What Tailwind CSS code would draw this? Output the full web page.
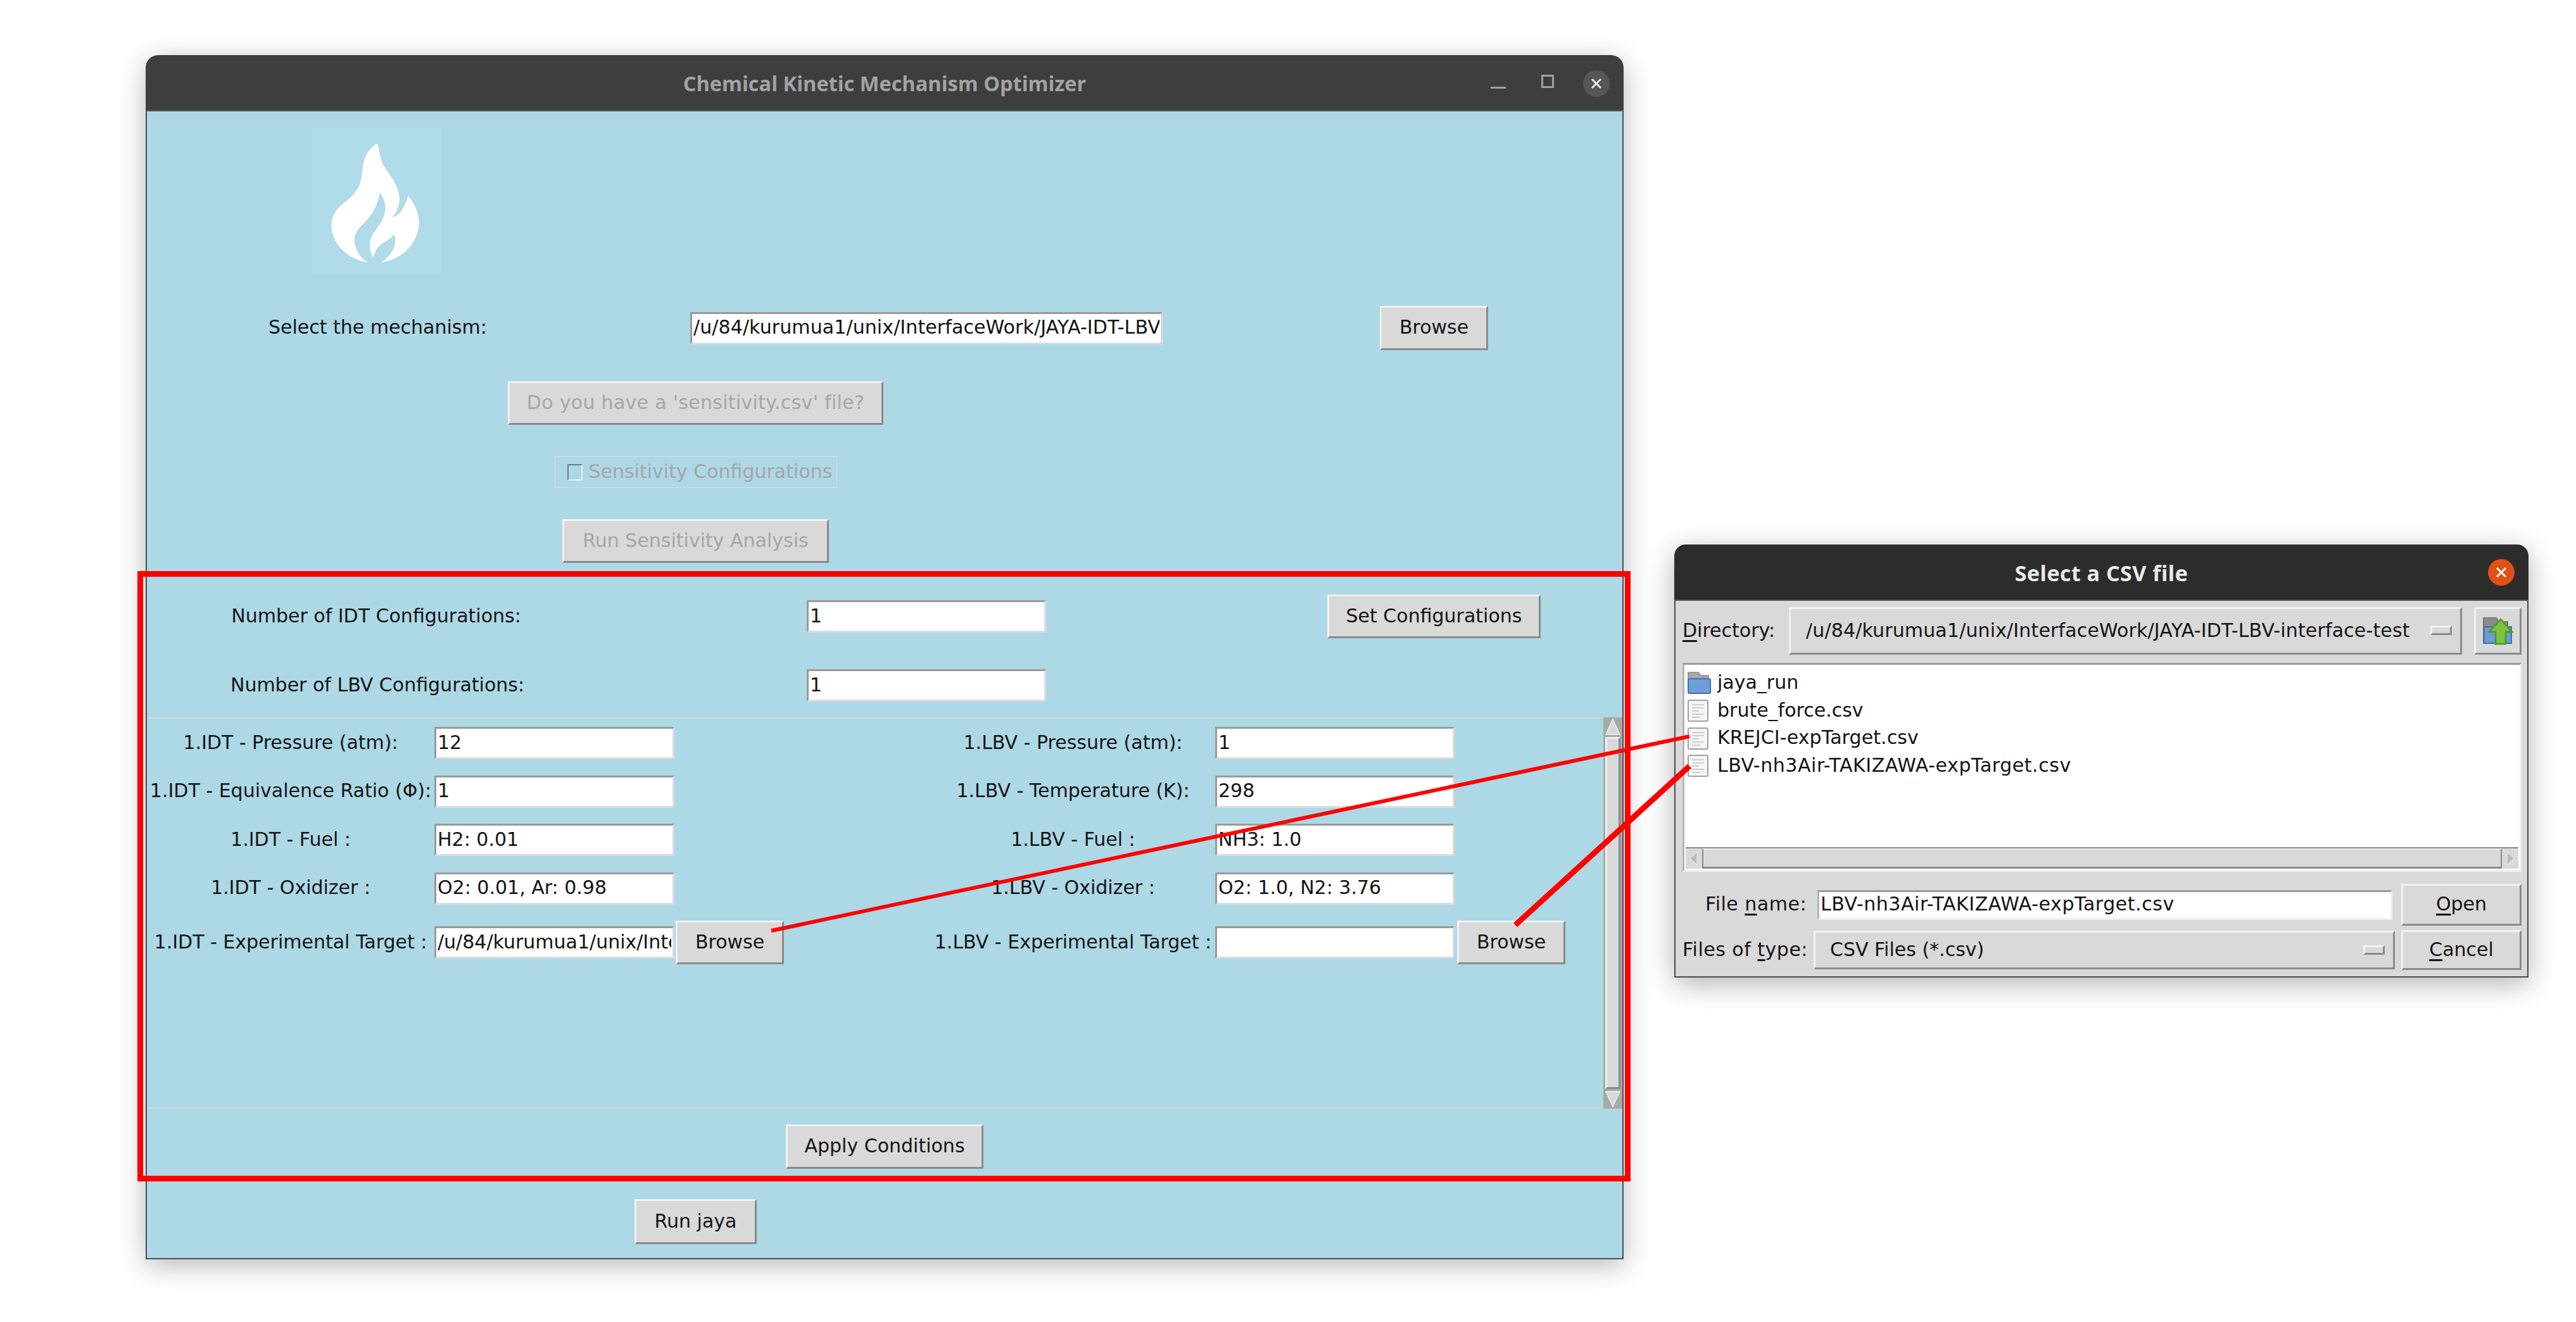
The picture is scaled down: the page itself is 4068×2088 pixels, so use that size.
<!DOCTYPE html>
<html lang="en">
<head>
  <meta charset="UTF-8" />
  <title>Chemical Kinetic Mechanism Optimizer</title>
  <script src="https://cdn.jsdelivr.net/npm/@tailwindcss/browser@4"></script>
</head>
<body class="bg-white">
<div class="relative w-[4068px] h-[2088px] overflow-hidden bg-white font-['DejaVu_Sans',sans-serif] text-[30px] leading-none whitespace-nowrap text-[#141414]">

  <!-- main window -->
  <section class="absolute left-[230px] top-[87px] w-[2334px] h-[1902px] flex flex-col rounded-t-[20px] shadow-[0_10px_44px_rgba(0,0,0,0.28)]">
    <header class="relative h-[89px] shrink-0 flex items-center justify-center rounded-t-[20px] bg-[#3e3e3e] border-b-2 border-[#5c5c5c]">
      <h1 class="mt-[4px] font-['Open_Sans',sans-serif] font-bold text-[32.5px] text-[#a3a3a3]">Chemical Kinetic Mechanism Optimizer</h1>
      <div class="absolute right-[22px] top-[24px] flex items-center">
        <span class="w-[24px] h-[3px] mt-[12px] bg-[#a0a0a0]"></span>
        <span class="w-[20px] h-[21px] ml-[56px] mb-[8px] border-[3px] border-[#a0a0a0]"></span>
        <span class="w-[42px] h-[42px] ml-[46px] flex items-center justify-center rounded-full bg-[#565656]">
          <svg width="18" height="18" viewBox="0 0 18 18"><path d="M2 2L16 16M16 2L2 16" stroke="#e6e6e6" stroke-width="3"/></svg>
        </span>
      </div>
    </header>

    <div class="flex-1 flex flex-col bg-[#add8e6] border-x-2 border-b-2 border-[#4a4f52]">
      <!-- logo -->
      <div class="ml-[260px] mt-[26px] w-[205px] h-[231px] bg-[#b0dbe9]">
        <svg class="w-full h-full" viewBox="155 65 615 695"><path fill="#fff" d="M468 140C478 180 480 215 500 250C530 295 565 335 572 395C574 430 560 465 538 490C570 485 600 440 612 388C645 425 665 470 665 520C660 610 590 690 482 705C525 680 552 640 552 600C552 590 548 578 545 570C530 600 480 610 462 645C454 660 450 670 447 680C430 650 424 615 440 580C460 540 505 505 505 440C503 415 490 385 478 372C470 425 450 470 410 510C375 545 355 565 358 605C362 645 390 690 425 705C340 695 250 625 248 530C250 450 310 425 345 390C395 340 390 300 398 245C405 190 440 150 468 140Z"/></svg>
      </div>

      <!-- mechanism -->
      <div class="mt-[50px] h-[70px] flex items-center">
        <span class="w-[858px] pl-[192px] pb-[2px]">Select the mechanism:</span>
        <input readonly value="/u/84/kurumua1/unix/InterfaceWork/JAYA-IDT-LBV" class="w-[746px] h-[51px] px-[2px] pb-[3px] tracking-[0.1px] bg-white border-[3px] border-t-[#9a9a9a] border-l-[#9a9a9a] border-b-[#dcdcdc] border-r-[#dcdcdc] outline-none" />
        <button class="ml-[343px] w-[171px] h-[70px] pb-[2px] bg-[#d9d9d9] border-[3px] border-t-[#f2f2f2] border-l-[#f2f2f2] border-b-[#8a8a8a] border-r-[#8a8a8a]">Browse</button>
      </div>

      <!-- sensitivity -->
      <div class="mt-[49px] w-[1733px] flex flex-col items-center text-[#a6a6a6]">
        <button class="w-[593px] h-[69px] pb-[2px] tracking-[0.3px] bg-[#d9d9d9] border-[3px] border-t-[#f2f2f2] border-l-[#f2f2f2] border-b-[#8a8a8a] border-r-[#8a8a8a]">Do you have a 'sensitivity.csv' file?</button>
        <label class="mt-[49px] w-[446px] h-[51px] flex items-center pl-[18px] gap-[10px] border-2 border-[#bfdfe8]">
          <span class="w-[24px] h-[26px] border-2 border-t-[#6b7b80] border-l-[#6b7b80] border-b-[#e6f4f8] border-r-[#e6f4f8]"></span>
          <span class="pb-[2px]">Sensitivity Configurations</span>
        </label>
        <button class="mt-[49px] w-[421px] h-[69px] pb-[2px] bg-[#d9d9d9] border-[3px] border-t-[#f2f2f2] border-l-[#f2f2f2] border-b-[#8a8a8a] border-r-[#8a8a8a]">Run Sensitivity Analysis</button>
      </div>

      <!-- number of configurations -->
      <div class="mt-[50px] h-[69px] flex items-center">
        <span class="w-[724px] pb-[2px] text-center">Number of IDT Configurations:</span>
        <input readonly value="1" class="ml-[318px] w-[378px] h-[51px] px-[2px] pb-[3px] bg-white border-[3px] border-t-[#9a9a9a] border-l-[#9a9a9a] border-b-[#dcdcdc] border-r-[#dcdcdc] outline-none" />
        <button class="ml-[444px] w-[337px] h-[69px] pb-[2px] bg-[#d9d9d9] border-[3px] border-t-[#f2f2f2] border-l-[#f2f2f2] border-b-[#8a8a8a] border-r-[#8a8a8a]">Set Configurations</button>
      </div>
      <div class="mt-[40px] h-[69px] flex items-center">
        <span class="w-[728px] pb-[2px] text-center">Number of LBV Configurations:</span>
        <input readonly value="1" class="ml-[314px] w-[378px] h-[51px] px-[2px] pb-[3px] bg-white border-[3px] border-t-[#9a9a9a] border-l-[#9a9a9a] border-b-[#dcdcdc] border-r-[#dcdcdc] outline-none" />
      </div>

      <!-- scrolling conditions -->
      <div class="mt-[16px] h-[618px] flex border-y-2 border-[#cfd6d9]">
        <div class="flex-1 pt-[13px] grid grid-cols-[454px_379px_407px_445px_378px_auto] gap-y-[25.5px] items-center content-start">
          <span class="pb-[2px] text-center">1.IDT - Pressure (atm):</span>
          <input readonly value="12" class="w-full h-[51px] px-[2px] pb-[3px] bg-white border-[3px] border-t-[#9a9a9a] border-l-[#9a9a9a] border-b-[#dcdcdc] border-r-[#dcdcdc] outline-none" />
          <span></span>
          <span class="pb-[2px] text-center">1.LBV - Pressure (atm):</span>
          <input readonly value="1" class="ml-[2px] w-full h-[51px] px-[2px] pb-[3px] bg-white border-[3px] border-t-[#9a9a9a] border-l-[#9a9a9a] border-b-[#dcdcdc] border-r-[#dcdcdc] outline-none" />
          <span></span>

          <span class="pb-[2px] text-center">1.IDT - Equivalence Ratio (Φ):</span>
          <input readonly value="1" class="w-full h-[51px] px-[2px] pb-[3px] bg-white border-[3px] border-t-[#9a9a9a] border-l-[#9a9a9a] border-b-[#dcdcdc] border-r-[#dcdcdc] outline-none" />
          <span></span>
          <span class="pb-[2px] text-center">1.LBV - Temperature (K):</span>
          <input readonly value="298" class="ml-[2px] w-full h-[51px] px-[2px] pb-[3px] bg-white border-[3px] border-t-[#9a9a9a] border-l-[#9a9a9a] border-b-[#dcdcdc] border-r-[#dcdcdc] outline-none" />
          <span></span>

          <span class="pb-[2px] text-center">1.IDT - Fuel :</span>
          <input readonly value="H2: 0.01" class="w-full h-[51px] px-[2px] pb-[3px] bg-white border-[3px] border-t-[#9a9a9a] border-l-[#9a9a9a] border-b-[#dcdcdc] border-r-[#dcdcdc] outline-none" />
          <span></span>
          <span class="pb-[2px] text-center">1.LBV - Fuel :</span>
          <input readonly value="NH3: 1.0" class="ml-[2px] w-full h-[51px] px-[2px] pb-[3px] bg-white border-[3px] border-t-[#9a9a9a] border-l-[#9a9a9a] border-b-[#dcdcdc] border-r-[#dcdcdc] outline-none" />
          <span></span>

          <span class="pb-[2px] text-center">1.IDT - Oxidizer :</span>
          <input readonly value="O2: 0.01, Ar: 0.98" class="w-full h-[51px] px-[2px] pb-[3px] bg-white border-[3px] border-t-[#9a9a9a] border-l-[#9a9a9a] border-b-[#dcdcdc] border-r-[#dcdcdc] outline-none" />
          <span></span>
          <span class="pb-[2px] text-center">1.LBV - Oxidizer :</span>
          <input readonly value="O2: 1.0, N2: 3.76" class="ml-[2px] w-full h-[51px] px-[2px] pb-[3px] bg-white border-[3px] border-t-[#9a9a9a] border-l-[#9a9a9a] border-b-[#dcdcdc] border-r-[#dcdcdc] outline-none" />
          <span></span>

          <span class="pb-[2px] text-center">1.IDT - Experimental Target :</span>
          <input readonly value="/u/84/kurumua1/unix/InterfaceWork/JAYA-IDT-LBV-interface-test/KREJCI-expTarget.csv" class="w-full h-[51px] px-[2px] pb-[3px] bg-white border-[3px] border-t-[#9a9a9a] border-l-[#9a9a9a] border-b-[#dcdcdc] border-r-[#dcdcdc] outline-none" />
          <button class="ml-[2px] w-[171px] h-[69px] pb-[2px] bg-[#d9d9d9] border-[3px] border-t-[#f2f2f2] border-l-[#f2f2f2] border-b-[#8a8a8a] border-r-[#8a8a8a]">Browse</button>
          <span class="pb-[2px] text-center">1.LBV - Experimental Target :</span>
          <input readonly value="" class="ml-[2px] w-full h-[51px] px-[2px] bg-white border-[3px] border-t-[#9a9a9a] border-l-[#9a9a9a] border-b-[#dcdcdc] border-r-[#dcdcdc] outline-none" />
          <button class="ml-[6px] w-[171px] h-[69px] pb-[2px] bg-[#d9d9d9] border-[3px] border-t-[#f2f2f2] border-l-[#f2f2f2] border-b-[#8a8a8a] border-r-[#8a8a8a]">Browse</button>
        </div>
        <!-- vertical scrollbar -->
        <div class="w-[30px] -my-[2px] shrink-0 flex flex-col bg-[#a9a9a9] px-[3px] py-[2px] gap-[3px]">
          <svg class="w-full h-[26px] shrink-0" viewBox="0 0 24 26"><path d="M12 1L23 25H1Z" fill="#d9d9d9" stroke="#efefef" stroke-width="1.5"/></svg>
          <div class="flex-1 bg-[#d9d9d9] border-[3px] border-t-[#efefef] border-l-[#efefef] border-b-[#8a8a8a] border-r-[#8a8a8a]"></div>
          <svg class="w-full h-[26px] shrink-0" viewBox="0 0 24 26"><path d="M12 25L23 1H1Z" fill="#d9d9d9" stroke="#efefef" stroke-width="1.5"/></svg>
        </div>
      </div>

      <div class="mt-[25px] flex justify-center">
        <button class="w-[312px] h-[70px] pb-[2px] bg-[#d9d9d9] border-[3px] border-t-[#f2f2f2] border-l-[#f2f2f2] border-b-[#8a8a8a] border-r-[#8a8a8a]">Apply Conditions</button>
      </div>
      <div class="mt-[48px] w-[1733px] flex justify-center">
        <button class="w-[193px] h-[71px] pb-[2px] bg-[#d9d9d9] border-[3px] border-t-[#f2f2f2] border-l-[#f2f2f2] border-b-[#8a8a8a] border-r-[#8a8a8a]">Run jaya</button>
      </div>
    </div>
  </section>

  <!-- file dialog -->
  <section class="absolute left-[2644px] top-[860px] w-[1349px] h-[684px] flex flex-col rounded-t-[18px] shadow-[0_10px_44px_rgba(0,0,0,0.3)]">
    <header class="relative h-[89px] shrink-0 flex items-center justify-center rounded-t-[18px] bg-[#2c2c2c] border-b-2 border-[#555]">
      <h2 class="mt-[2px] font-['Open_Sans',sans-serif] font-bold text-[34px] tracking-[0.5px] text-[#ececec]">Select a CSV file</h2>
      <span class="absolute right-[22px] top-[23px] w-[42px] h-[42px] flex items-center justify-center rounded-full bg-[#e25016]">
        <svg width="18" height="18" viewBox="0 0 18 18"><path d="M2 2L16 16M16 2L2 16" stroke="#fff" stroke-width="3"/></svg>
      </span>
    </header>

    <div class="flex-1 flex flex-col bg-[#d9d9d9] border-x-2 border-b-2 border-[#4a4a4a] pl-[11px] pr-[9px]">
      <!-- directory row -->
      <div class="mt-[10px] h-[75px] flex items-center">
        <span class="w-[168px] pb-[2px]"><span class="underline underline-offset-[5px]">D</span>irectory:</span>
        <button class="relative w-[1063px] h-[75px] pl-[24px] pb-[2px] tracking-[0.15px] text-left border-[3px] border-t-[#f2f2f2] border-l-[#f2f2f2] border-b-[#8a8a8a] border-r-[#8a8a8a]">
          /u/84/kurumua1/unix/InterfaceWork/JAYA-IDT-LBV-interface-test
          <span class="absolute right-[13px] top-[26px] w-[34px] h-[15px] border-[3px] border-t-[#f2f2f2] border-l-[#f2f2f2] border-b-[#8a8a8a] border-r-[#8a8a8a]"></span>
        </button>
        <button class="ml-[19px] w-[75px] h-[75px] flex items-center justify-center border-[3px] border-t-[#f2f2f2] border-l-[#f2f2f2] border-b-[#8a8a8a] border-r-[#8a8a8a]">
          <svg width="50" height="46" viewBox="0 0 50 46">
            <path d="M2 2H22L26 8H40V42H2Z" fill="#8c8c8c" stroke="#777" stroke-width="2"/>
            <path d="M3 16H46V42H3Z" fill="#6a9bd8" stroke="#3f6fae" stroke-width="2"/>
            <path d="M29 4L47 24H37V43H21V24H11Z" fill="#7cc242" stroke="#4e9a1a" stroke-width="2.5"/>
          </svg>
        </button>
      </div>

      <!-- file list -->
      <div class="mt-[13px] h-[330px] flex flex-col bg-white border-[3px] border-t-[#9a9a9a] border-l-[#b5b5b5] border-b-[#efefef] border-r-[#efefef]">
        <ul class="flex-1 pt-[7px] pl-[5px]">
          <li class="h-[43.7px] flex items-center gap-[10px]">
            <svg class="shrink-0" width="37" height="35" viewBox="0 0 37 35">
              <path d="M1 1H17L21 6H33V14H1Z" fill="#a8a8a8" stroke="#8a8a8a" stroke-width="1.5"/>
              <rect x="1" y="11" width="35" height="23" rx="2" fill="#6f9fd8" stroke="#3f6fae" stroke-width="2"/>
            </svg>
            <span class="-mt-[2px]">jaya_run</span>
          </li>
          <li class="h-[43.7px] flex items-center gap-[14px]">
            <svg class="shrink-0" width="33" height="35" viewBox="0 0 33 35">
              <rect x="1" y="1" width="31" height="33" rx="2" fill="#f5f5f5" stroke="#a0a0a0" stroke-width="2"/>
              <path d="M7 8H26M7 13H26M7 18H18M7 23H26M7 28H20" stroke="#cfcfcf" stroke-width="2"/>
            </svg>
            <span class="-mt-[2px]">brute_force.csv</span>
          </li>
          <li class="h-[43.7px] flex items-center gap-[14px]">
            <svg class="shrink-0" width="33" height="35" viewBox="0 0 33 35">
              <rect x="1" y="1" width="31" height="33" rx="2" fill="#f5f5f5" stroke="#a0a0a0" stroke-width="2"/>
              <path d="M7 8H26M7 13H26M7 18H18M7 23H26M7 28H20" stroke="#cfcfcf" stroke-width="2"/>
            </svg>
            <span class="-mt-[2px] tracking-[0.1px]">KREJCI-expTarget.csv</span>
          </li>
          <li class="h-[43.7px] flex items-center gap-[14px]">
            <svg class="shrink-0" width="33" height="35" viewBox="0 0 33 35">
              <rect x="1" y="1" width="31" height="33" rx="2" fill="#f5f5f5" stroke="#a0a0a0" stroke-width="2"/>
              <path d="M7 8H26M7 13H26M7 18H18M7 23H26M7 28H20" stroke="#cfcfcf" stroke-width="2"/>
            </svg>
            <span class="-mt-[2px] tracking-[0.55px]">LBV-nh3Air-TAKIZAWA-expTarget.csv</span>
          </li>
        </ul>
        <!-- horizontal scrollbar -->
        <div class="h-[34px] mx-[2px] mb-[2px] flex bg-[#bdbdbd] border-t-2 border-[#8a8a8a]">
          <svg class="w-[26px] h-full shrink-0 bg-[#d9d9d9]" viewBox="0 0 26 32"><path d="M7 16L18 6V26Z" fill="#bbb" stroke="#efefef"/></svg>
          <div class="flex-1 bg-[#d9d9d9] border-x-2 border-t-2 border-b-[3px] border-t-[#efefef] border-l-[#8a8a8a] border-r-[#8a8a8a] border-b-[#8a8a8a]"></div>
          <svg class="w-[26px] h-full shrink-0 bg-[#d9d9d9]" viewBox="0 0 26 32"><path d="M19 16L8 6V26Z" fill="#bbb" stroke="#efefef"/></svg>
        </div>
      </div>

      <!-- file name row -->
      <div class="mt-[19px] h-[66px] flex items-center">
        <span class="w-[196px] pb-[2px] tracking-[0.5px] text-right">File <span class="underline underline-offset-[5px]">n</span>ame:</span>
        <input readonly value="LBV-nh3Air-TAKIZAWA-expTarget.csv" class="ml-[17px] w-[908px] h-[47px] px-[2px] pb-[3px] tracking-[0.55px] bg-white border-[3px] border-t-[#9a9a9a] border-l-[#b5b5b5] border-b-[#efefef] border-r-[#efefef] outline-none" />
        <button class="ml-[14px] w-[190px] h-[66px] pb-[2px] border-[3px] border-t-[#f2f2f2] border-l-[#f2f2f2] border-b-[#8a8a8a] border-r-[#8a8a8a]"><span class="underline underline-offset-[5px]">O</span>pen</button>
      </div>
      <!-- file type row -->
      <div class="mt-[7px] h-[63px] flex items-center">
        <span class="w-[207px] pb-[2px] tracking-[0.5px]">Files of <span class="underline underline-offset-[5px]">t</span>ype:</span>
        <button class="relative w-[918px] h-[61px] pl-[23px] pb-[2px] text-left border-[3px] border-t-[#f2f2f2] border-l-[#f2f2f2] border-b-[#8a8a8a] border-r-[#8a8a8a]">
          CSV Files (*.csv)
          <span class="absolute right-[13px] top-[20px] w-[34px] h-[15px] border-[3px] border-t-[#f2f2f2] border-l-[#f2f2f2] border-b-[#8a8a8a] border-r-[#8a8a8a]"></span>
        </button>
        <button class="ml-[10px] w-[190px] h-[63px] pb-[2px] border-[3px] border-t-[#f2f2f2] border-l-[#f2f2f2] border-b-[#8a8a8a] border-r-[#8a8a8a]"><span class="underline underline-offset-[5px]">C</span>ancel</button>
      </div>
    </div>
  </section>

  <!-- red annotations -->
  <svg class="absolute left-0 top-0 pointer-events-none" width="4068" height="2088" viewBox="0 0 4068 2088" fill="none" stroke="#ff0000">
    <rect x="221.5" y="906.5" width="2349" height="955" stroke-width="9"/>
    <path d="M1218 1470L2668 1163" stroke-width="6"/>
    <path d="M2393 1461L2668 1210" stroke-width="9"/>
  </svg>
</div>
</body>
</html>
